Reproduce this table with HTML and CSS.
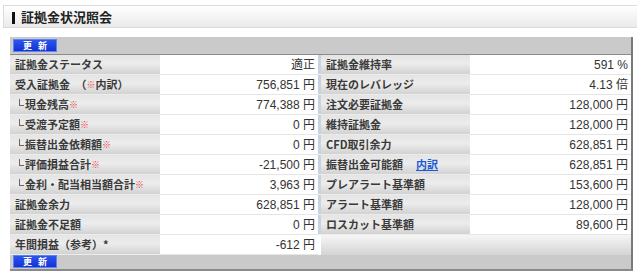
FILE: index.html
```html
<!DOCTYPE html>
<html lang="ja">
<head>
<meta charset="utf-8">
<link rel="stylesheet" href="styles.css">
</head>
<body>
<div class="page-head"><span class="mark"></span><h1>証拠金状況照会</h1></div>
<div class="panel">
  <div class="bar"><button class="btn">更 新</button></div>
  <div class="cols">
    <div class="tbl left">
      <div class="row"><div class="lab">証拠金ステータス</div><div class="val">適正</div></div>
      <div class="row"><div class="lab">受入証拠金　（<span class="kome">※</span>内訳）</div><div class="val">756,851 円</div></div>
      <div class="row"><div class="lab sub"><i class="corner"></i>現金残高<span class="kome">※</span></div><div class="val">774,388 円</div></div>
      <div class="row"><div class="lab sub"><i class="corner"></i>受渡予定額<span class="kome">※</span></div><div class="val">0 円</div></div>
      <div class="row"><div class="lab sub"><i class="corner"></i>振替出金依頼額<span class="kome">※</span></div><div class="val">0 円</div></div>
      <div class="row"><div class="lab sub"><i class="corner"></i>評価損益合計<span class="kome">※</span></div><div class="val">-21,500 円</div></div>
      <div class="row"><div class="lab sub"><i class="corner"></i>金利・配当相当額合計<span class="kome">※</span></div><div class="val">3,963 円</div></div>
      <div class="row"><div class="lab">証拠金余力</div><div class="val">628,851 円</div></div>
      <div class="row"><div class="lab">証拠金不足額</div><div class="val">0 円</div></div>
      <div class="row"><div class="lab">年間損益（参考）*</div><div class="val">-612 円</div></div>
    </div>
    <div class="strip">
      <div class="sc"></div><div class="sc"></div><div class="sc"></div><div class="sc"></div><div class="sc"></div><div class="sc"></div><div class="sc"></div><div class="sc"></div><div class="sc"></div><div class="sc blank"></div>
    </div>
    <div class="tbl right">
      <div class="row"><div class="lab">証拠金維持率</div><div class="val">591 %</div></div>
      <div class="row"><div class="lab">現在のレバレッジ</div><div class="val">4.13 倍</div></div>
      <div class="row"><div class="lab">注文必要証拠金</div><div class="val">128,000 円</div></div>
      <div class="row"><div class="lab">維持証拠金</div><div class="val">128,000 円</div></div>
      <div class="row"><div class="lab">CFD取引余力</div><div class="val">628,851 円</div></div>
      <div class="row"><div class="lab">振替出金可能額　<a class="link" href="#">内訳</a></div><div class="val">628,851 円</div></div>
      <div class="row"><div class="lab">プレアラート基準額</div><div class="val">153,600 円</div></div>
      <div class="row"><div class="lab">アラート基準額</div><div class="val">128,000 円</div></div>
      <div class="row"><div class="lab">ロスカット基準額</div><div class="val">89,600 円</div></div>
      <div class="fill"></div>
    </div>
  </div>
  <div class="bar bottom"><button class="btn">更 新</button></div>
</div>
<p class="note">＊年間損益は、当年1月1日以降の確定損益の合計額（参考値）です。</p>
</body>
</html>
```
FILE: styles.css
```css
html, body {
  margin: 0;
  padding: 0;
  background: #fff;
  font-family: "Liberation Sans", "Noto Sans CJK JP", sans-serif;
  color: #333;
}
.page-head {
  margin: 5px 0 0 3px;
  height: 21px;
  border: 1px solid #dcdcdc;
  border-right: none;
  background: linear-gradient(#ffffff, #eaeaea);
  display: flex;
  align-items: center;
}
.mark {
  width: 3px;
  height: 12px;
  background: #111;
  margin: 2px 0 0 8px;
  align-self: center;
}
.page-head h1 {
  margin: 0 0 0 6px;
  font-size: 13px;
  font-weight: bold;
  color: #222;
  font-family: "Noto Sans CJK JP", sans-serif;
  line-height: 1;
}
.panel {
  margin: 9px 0 0 10px;
  width: 621px;
  background: #cacaca;
  border-right: 2px solid #7a7a7a;
  border-bottom: 2px solid #8a8a8a;
}
.bar {
  border-bottom: 1px solid #8c8c8c;
  padding: 2px 0 0 3px;
  box-sizing: border-box;
  height: 18px;
}
.bar.bottom {
  border-bottom: none;
  height: 14px;
  padding-top: 0;
}
.btn {
  display: block;
  width: 44px;
  height: 13px;
  padding: 0;
  margin: 0;
  border: 1px solid #5a84f4;
  background: linear-gradient(#2c55ec, #1533d2);
  color: #fff;
  font-family: "Noto Sans CJK JP", sans-serif;
  font-size: 9px;
  font-weight: bold;
  line-height: 11px;
  letter-spacing: 2px;
  text-indent: 2px;
}
.cols {
  display: flex;
}
.tbl {
  display: flex;
  flex-direction: column;
}
.tbl.left { width: 308px; }
.tbl.right { flex: 1; }
.row {
  display: flex;
  height: 20px;
}
.lab {
  box-sizing: border-box;
  height: 20px;
  border-bottom: 1px solid #ececec;
  background: linear-gradient(#e4e4e4, #ececec 45%, #d2d2d2);
  font-family: "Noto Sans CJK JP", sans-serif;
  font-size: 11px;
  font-weight: bold;
  color: #3a3a3a;
  line-height: 19px;
  padding-left: 5px;
  white-space: nowrap;
  display: flex;
  align-items: center;
}
.left .lab { width: 150px; }
.right .lab { width: 149px; }
.val {
  box-sizing: border-box;
  flex: 1;
  height: 20px;
  background: #fff;
  border-bottom: 1px solid #e6e6e6;
  text-align: right;
  padding-right: 3px;
  font-size: 12px;
  line-height: 20px;
  color: #333;
  white-space: nowrap;
}
.lab.sub { padding-left: 9px; }
.corner {
  display: inline-block;
  width: 4px;
  height: 6px;
  border-left: 1px solid #666;
  border-bottom: 1px solid #666;
  margin: -4px 1px 0 0;
}
.kome {
  color: #ef3e3e;
  font-size: 9px;
}
.link {
  color: #1d5ad8;
  text-decoration: underline;
  margin-left: 2px;
}
.strip {
  width: 3px;
  display: flex;
  flex-direction: column;
}
.sc {
  height: 20px;
  box-sizing: border-box;
  background: #c9d2de;
  border-bottom: 1px solid #f0f0f0;
}
.sc.blank { background: #fff; border-bottom: none; }
.fill {
  flex: 1;
  background: linear-gradient(#f6f6f6, #d4d4d4);
}
.note {
  margin: 1px 0 0 14px;
  font-family: "Noto Sans CJK JP", sans-serif;
  font-size: 11px;
  color: #555;
  line-height: 14px;
}
```
